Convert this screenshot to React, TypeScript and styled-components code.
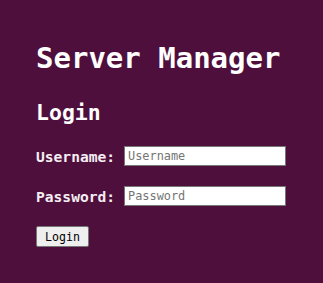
import React from "react";
import styled, { createGlobalStyle } from "styled-components";

const Global = createGlobalStyle`
  html, body {
    margin: 0;
    padding: 0;
    background: #4f0f3d;
  }
  body {
    font-family: "DejaVu Sans Mono", "Liberation Mono", monospace;
    color: #ffffff;
  }
`;

const Page = styled.div`
  min-height: 283px;
  box-sizing: border-box;
  padding: 41px 36px 0 36px;
  display: flex;
  flex-direction: column;
`;

const Title = styled.h1`
  margin: 0;
  font-size: 29px;
  line-height: 34px;
  font-weight: bold;
  color: #ffffff;
`;

const Subtitle = styled.h2`
  margin: 25px 0 0 0;
  font-size: 21.5px;
  line-height: 26px;
  font-weight: bold;
  color: #ffffff;
`;

const Form = styled.form`
  margin-top: 20px;
  display: flex;
  flex-direction: column;
  align-items: flex-start;
  gap: 20px;
`;

const Row = styled.div`
  display: flex;
  align-items: center;
  height: 20px;
`;

const Label = styled.label`
  width: 88px;
  font-size: 14.6px;
  font-weight: bold;
  color: #f4eef2;
  white-space: nowrap;
`;

const Input = styled.input`
  box-sizing: border-box;
  width: 162px;
  height: 20px;
  margin: 0;
  padding: 0 3px;
  border: 1px solid #767676;
  border-radius: 0;
  background: #ffffff;
  font-family: "DejaVu Sans Mono", "Liberation Mono", monospace;
  font-size: 11.9px;
  color: #000;
  outline: none;
  &::placeholder {
    color: #757575;
  }
`;

const Button = styled.button`
  box-sizing: border-box;
  width: 53px;
  height: 21px;
  margin: 0;
  padding: 0;
  border: 1px solid #767676;
  border-radius: 2px;
  background: #efefef;
  font-family: "DejaVu Sans Mono", "Liberation Mono", monospace;
  font-size: 11.6px;
  color: #000;
  text-align: center;
`;

export default function App() {
  return (
    <>
      <Global />
      <Page>
        <Title>Server Manager</Title>
        <Subtitle>Login</Subtitle>
        <Form onSubmit={(e) => e.preventDefault()}>
          <Row>
            <Label htmlFor="username">Username:</Label>
            <Input id="username" type="text" placeholder="Username" />
          </Row>
          <Row>
            <Label htmlFor="password">Password:</Label>
            <Input id="password" type="password" placeholder="Password" />
          </Row>
          <Button type="submit">Login</Button>
        </Form>
      </Page>
    </>
  );
}
